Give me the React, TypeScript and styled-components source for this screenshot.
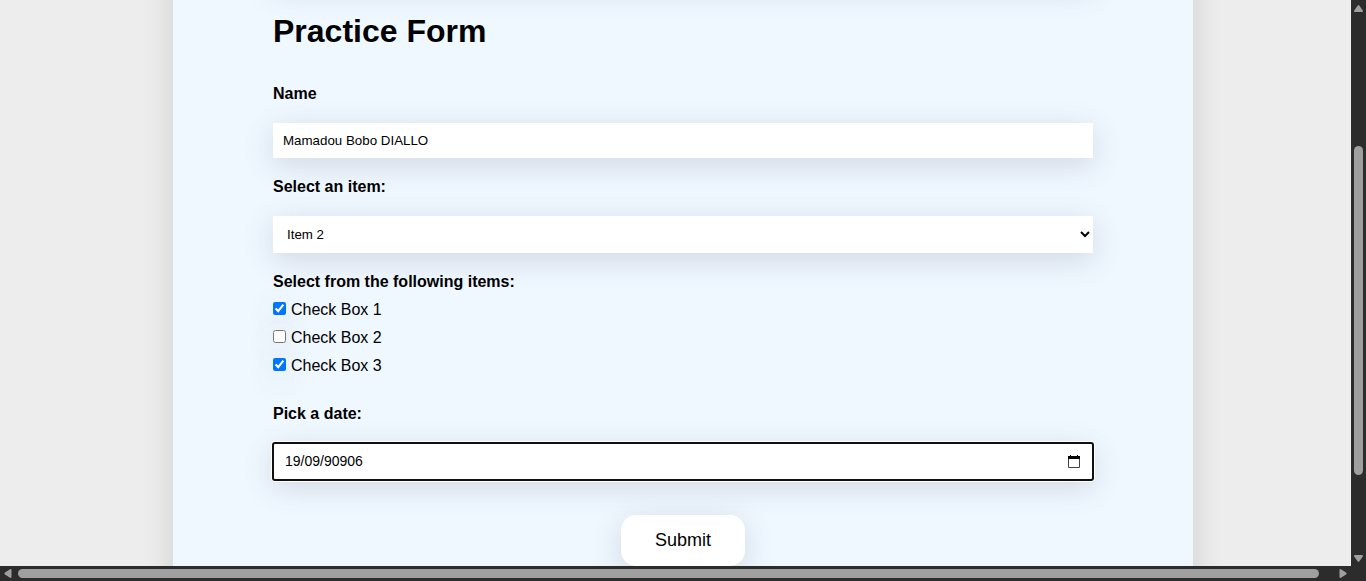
import React from "react";
import styled, { createGlobalStyle, css } from "styled-components";

const Global = createGlobalStyle`
  * { box-sizing: border-box; }
  body { margin: 0; font-family: "Liberation Sans", Arial, sans-serif; color: #000; }
`;

const lift = "0 7px 30px 0 rgba(90, 95, 105, 0.2)";

const Frame = styled.div`
  display: grid;
  grid-template: minmax(0, 1fr) 15px / minmax(0, 1fr) 15px;
  height: 100vh;
  background: #2c2c2c;
`;

const Viewport = styled.div`
  overflow: hidden;
  background: #ededed;
  padding: 0 158px 0 173px;
`;

const Page = styled.main`
  min-height: calc(100% + 80px);
  margin-top: -40px;
  padding: 0 100px 40px;
  background: #eff7ff;
  box-shadow: 0 0 30px rgba(0, 0, 0, 0.13);
`;

const Banner = styled.div`
  height: 24px;
  box-shadow: ${lift};
`;

const Form = styled.form`
  display: flex;
  flex-direction: column;
  padding-top: 29px;
`;

const Title = styled.h1`
  margin: 0 0 35px;
  font-size: 32px;
  line-height: 37px;
`;

const Field = styled.div`
  display: flex;
  flex-direction: column;
  gap: 20px;
  margin-bottom: 20px;
`;

const labelText = css`
  font-size: 16px;
  font-weight: bold;
  line-height: 18px;
`;

const Label = styled.label`
  ${labelText}
`;

const control = css`
  display: block;
  width: 100%;
  margin: 0;
  border: 0;
  border-radius: 0;
  background-color: #fff;
  color: #000;
  font-family: inherit;
  box-shadow: ${lift};
`;

const TextInput = styled.input`
  ${control}
  height: 35px;
  padding: 0 10px;
`;

const Select = styled.select`
  ${control}
  height: 37px;
  padding: 0 10px;
`;

const DateBox = styled.div`
  display: flex;
  align-items: center;
  height: 37px;
  padding-right: 13px;
  background: #fff;
  border-radius: 2px;
  outline: 2px solid #101010;
  outline-offset: -1px;
  box-shadow: 0 0 0 2px #fff, ${lift};
`;

const DateInput = styled.input`
  flex: 1;
  min-width: 0;
  padding: 0 12px 2px;
  border: 0;
  outline: 0;
  background: transparent;
  font-family: inherit;
  font-size: 14px;
`;

const PickerButton = styled.button`
  display: flex;
  padding: 0;
  border: 0;
  background: none;
`;

const Choices = styled.fieldset`
  display: flex;
  flex-direction: column;
  gap: 10px;
  min-width: 0;
  margin: 0 0 30px;
  padding: 0;
  border: 0;
`;

const Legend = styled.legend`
  ${labelText}
  padding: 0;
  margin-bottom: 10px;
`;

const Choice = styled.label`
  display: flex;
  align-items: flex-start;
  gap: 5px;
  font-size: 16px;
  line-height: 18px;
`;

const Check = styled.input`
  width: 13px;
  height: 13px;
  margin: 1px 0 0;
  box-shadow: ${lift};
`;

const Submit = styled.button`
  align-self: center;
  margin-top: 15px;
  padding: 15px 34px;
  border: 0;
  border-radius: 15px;
  background: #fff;
  color: #000;
  font-family: inherit;
  font-size: 18px;
  line-height: 21px;
  box-shadow: ${lift};
`;

const Bar = styled.div<{ $vertical?: boolean }>`
  display: flex;
  align-items: center;
  flex-direction: ${(p) => (p.$vertical ? "column" : "row")};
  padding: ${(p) => (p.$vertical ? "5px 0 4px" : "0 4px")};
`;

const Track = styled.div<{ $vertical?: boolean }>`
  flex: 1;
  display: flex;
  flex-direction: ${(p) => (p.$vertical ? "column" : "row")};
  padding: ${(p) => (p.$vertical ? "0" : "0 20px 0 6px")};
`;

const Space = styled.div<{ $grow: number }>`
  flex: ${(p) => p.$grow};
`;

const Thumb = styled.div<{ $grow: number }>`
  flex: ${(p) => p.$grow};
  min-width: 9px;
  min-height: 9px;
  border-radius: 5px;
  background: #9f9f9f;
`;

const arrows = {
  up: { w: 9, h: 7, d: "M3.6.7Q4.5-.5 5.4.7L8.8 5.5Q9.2 7 8 7H1Q-.2 7 .2 5.5Z" },
  down: { w: 9, h: 7, d: "M3.6 6.3Q4.5 7.5 5.4 6.3L8.8 1.5Q9.2 0 8 0H1Q-.2 0 .2 1.5Z" },
  left: { w: 8, h: 9, d: "M1 3.6Q-.2 4.5 1 5.4L6 8.8Q7.5 9.2 7.5 8V1Q7.5-.2 6 .2Z" },
  right: { w: 8, h: 9, d: "M7 3.6Q8.2 4.5 7 5.4L2 8.8Q.5 9.2 .5 8V1Q.5-.2 2 .2Z" },
};

function Arrow({ to }: { to: keyof typeof arrows }) {
  const { w, h, d } = arrows[to];
  return (
    <svg width={w} height={h} viewBox={`0 0 ${w} ${h}`} aria-hidden="true">
      <path d={d} fill="#9f9f9f" />
    </svg>
  );
}

export default function App() {
  return (
    <>
      <Global />
      <Frame>
        <Viewport>
          <Page>
            <Banner />
            <Form onSubmit={(e) => e.preventDefault()}>
              <Title>Practice Form</Title>
              <Field>
                <Label htmlFor="name">Name</Label>
                <TextInput id="name" type="text" defaultValue="Mamadou Bobo DIALLO" />
              </Field>
              <Field>
                <Label htmlFor="item">Select an item:</Label>
                <Select id="item" defaultValue="2">
                  <option value="1">Item 1</option>
                  <option value="2">Item 2</option>
                  <option value="3">Item 3</option>
                </Select>
              </Field>
              <Choices>
                <Legend>Select from the following items:</Legend>
                {[1, 2, 3].map((n) => (
                  <Choice key={n} htmlFor={`check${n}`}>
                    <Check id={`check${n}`} type="checkbox" defaultChecked={n !== 2} />
                    Check Box {n}
                  </Choice>
                ))}
              </Choices>
              <Field>
                <Label htmlFor="date">Pick a date:</Label>
                <DateBox>
                  <DateInput id="date" type="text" defaultValue="19/09/90906" />
                  <PickerButton type="button" aria-label="Show date picker">
                    <svg width="12" height="13" viewBox="0 0 12 13" aria-hidden="true">
                      <path d="M2 0h1v1h6V0h1v1h2v3H0V1h2z" fill="#000" />
                      <path d="M.5 4v8.5h11V4" fill="none" stroke="#444" />
                    </svg>
                  </PickerButton>
                </DateBox>
              </Field>
              <Submit type="submit">Submit</Submit>
            </Form>
          </Page>
        </Viewport>
        <Bar $vertical>
          <Arrow to="up" />
          <Track $vertical>
            <Space $grow={134} />
            <Thumb $grow={329} />
            <Space $grow={80} />
          </Track>
          <Arrow to="down" />
        </Bar>
        <Bar>
          <Arrow to="left" />
          <Track>
            <Thumb $grow={1} />
          </Track>
          <Arrow to="right" />
        </Bar>
      </Frame>
    </>
  );
}
